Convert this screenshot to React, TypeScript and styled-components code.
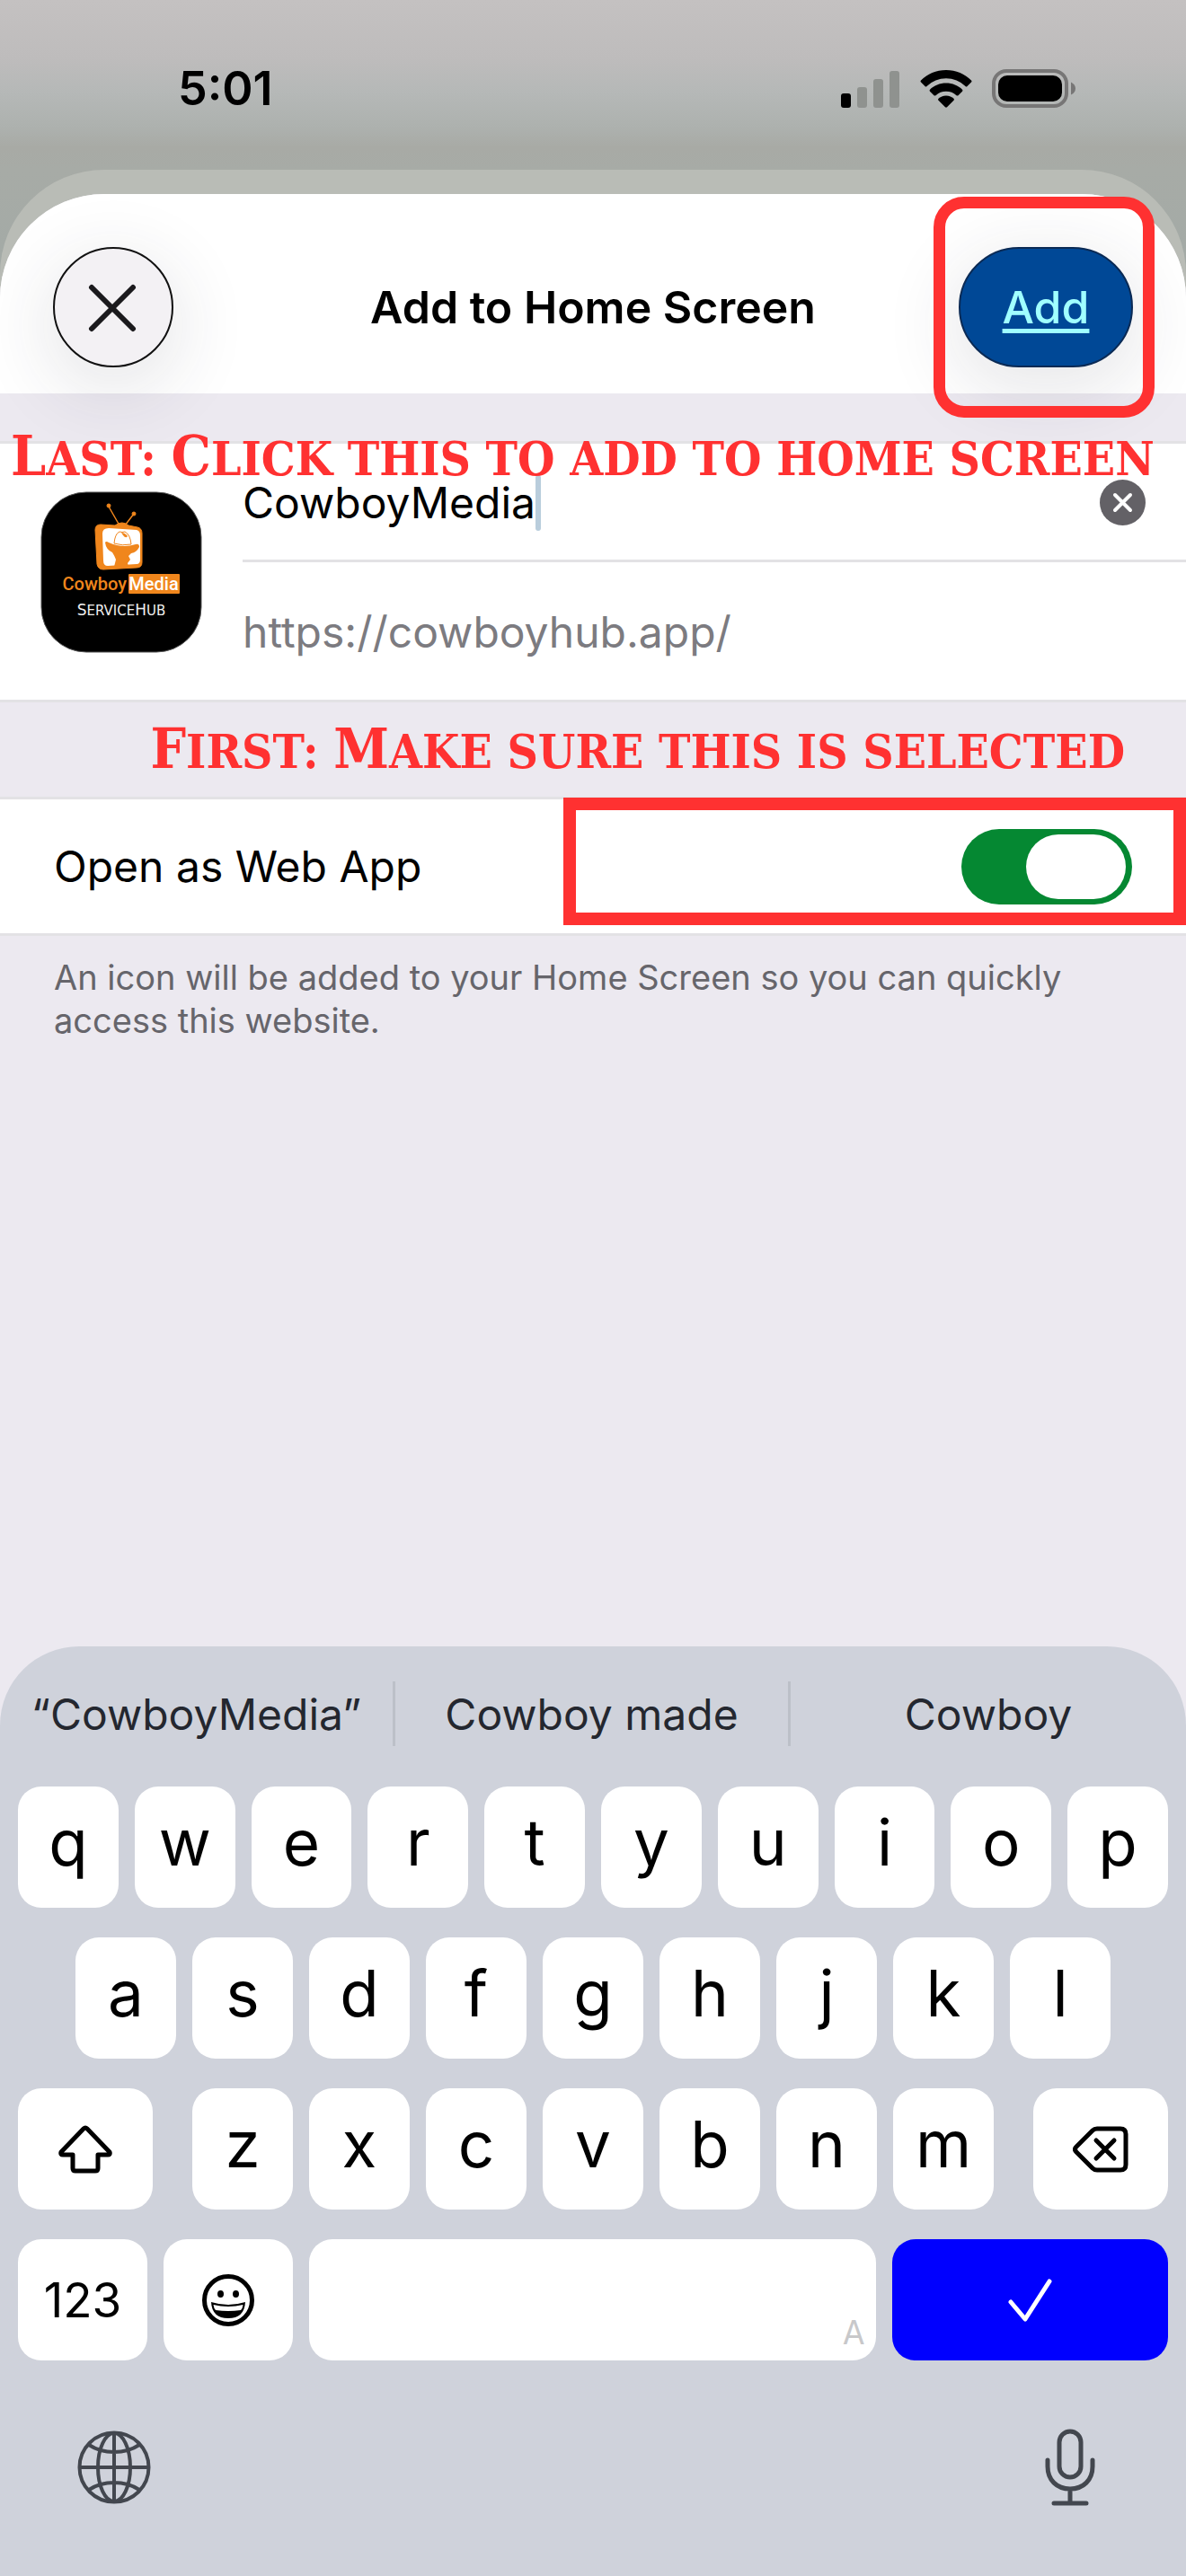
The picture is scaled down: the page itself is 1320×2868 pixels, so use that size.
import styled, { createGlobalStyle } from 'styled-components';
import { useState } from 'react';

/* —— tokens —— */
const sans    = `Inter, "Liberation Sans", sans-serif`;
const red     = '#ff3131';
const bgSheet = '#ece9f0';
const line    = '#e3e2e5';
const txtMain = '#000';
const txtSub  = '#7c7b80';
const bgKeys  = '#cfd2db';

const Global = createGlobalStyle`
  * { box-sizing: border-box; }
  body { margin: 0; font-family: ${sans}; background: ${bgKeys}; color: ${txtMain}; }
  button, input { font: inherit; color: inherit; margin: 0; padding: 0; border: 0; background: none; }
  button { cursor: pointer; }
  svg { display: block; }
`;

/* —— screen —— */
const Screen = styled.main`
  display: flex;
  flex-direction: column;
  min-height: 100vh;
  background: linear-gradient(#c4c1c1 0, #bebcbc 64px, #b5b8b7 104px, #adb1ae 142px, #a8aaa5 164px, #a7aba6 189px, #a3aaa6 300px);
`;

const StatusBar = styled.header`
  display: flex;
  align-items: center;
  justify-content: space-between;
  height: 189px;
  padding: 8px 122px 0 198px;
`;
const Clock = styled.time`
  font-size: 52px;
  font-weight: 600;
  line-height: 60px;
`;
const StatusIcons = styled.div`
  display: flex;
  align-items: center;
  gap: 22px;
`;

/* —— sheets —— */
const BackSheet = styled.div`
  display: flex;
  flex: 1;
  flex-direction: column;
  padding-top: 27px;
  background: #b9bcb6;
  border-radius: 116px 116px 0 0;
`;
const Sheet = styled.section`
  display: flex;
  flex: 1;
  flex-direction: column;
  background: ${bgSheet};
  border-radius: 116px 116px 0 0;
`;

const TitleBar = styled.div`
  display: grid;
  grid-template-columns: 1fr auto 1fr;
  align-items: center;
  height: 222px;
  padding: 30px 59px 0;
  background: #fff;
  border-radius: inherit;
`;
const Title = styled.h1`
  margin: 0;
  font-size: 50px;
  font-weight: 600;
  line-height: 60px;
`;
const RoundButton = styled.button`
  display: grid;
  place-items: center;
  width: 134px;
  height: 134px;
  border: 2px solid #111;
  border-radius: 67px;
  background: #f3f1f4;
  box-shadow: 0 20px 80px 10px rgba(50, 44, 60, .11);
`;
const AddSlot = styled.div`
  position: relative;
  justify-self: end;
`;
const AddButton = styled(RoundButton)`
  width: 194px;
  border-color: #0a2a55;
  background: #004896;
  color: #a0ffff;
  font-size: 50px;
  font-weight: 500;
  text-decoration: underline;
  text-decoration-thickness: 5px;
  text-underline-offset: 6px;
`;

/* —— hand-made marks over the sheet —— */
const AddMark = styled.div`
  position: absolute;
  inset: -56px -24px -56px -28px;
  border: 13px solid ${red};
  border-radius: 34px;
  pointer-events: none;
`;
const ToggleMark = styled.div`
  position: absolute;
  inset: -2px 0 9px 627px;
  border: 14px solid ${red};
  pointer-events: none;
`;
const Note = styled.p`
  margin: 0;
  color: ${red};
  font-family: "DejaVu Serif Condensed", "DejaVu Serif", serif;
  font-size: 53px;
  font-weight: 700;
  line-height: 60px;
  text-transform: uppercase;
  white-space: nowrap;
`;
const Cap = styled.span`
  font-size: 62px;
`;
const FloatingNote = styled(Note)`
  position: absolute;
  top: -16px;
  left: 12px;
`;
const NoteStrip = styled.div`
  display: flex;
  align-items: center;
  justify-content: flex-end;
  height: 105px;
  padding-right: 68px;
`;

/* —— form groups —— */
const Group = styled.div`
  position: relative;
  display: flex;
  border: solid ${line};
  border-width: 3px 0;
  background: #fff;
`;
const SiteGroup = styled(Group)`
  align-items: center;
  gap: 45px;
  margin-top: 53px;
  padding-left: 45px;
`;
const Fields = styled.div`
  flex: 1;
`;
const Field = styled.div<{ $height: number; $divided?: boolean }>`
  display: flex;
  align-items: center;
  height: ${p => p.$height}px;
  padding: 2px 45px 0 0;
  border-bottom: ${p => (p.$divided ? `3px solid ${line}` : '0')};
  font-size: 48px;
  line-height: 60px;
`;
const NameInput = styled.input`
  field-sizing: content;
  outline: none;
`;
const Caret = styled.span`
  width: 6px;
  height: 62px;
  border-radius: 3px;
  background: #b9cddc;
`;
const ClearButton = styled.button`
  margin-left: auto;
`;
const Url = styled.span`
  color: ${txtSub};
`;
const ToggleRow = styled(Group)`
  align-items: center;
  justify-content: space-between;
  height: 155px;
  padding: 0 60px;
  font-size: 48px;
`;
const Switch = styled.input`
  appearance: none;
  display: flex;
  align-items: center;
  width: 190px;
  height: 84px;
  padding: 0 7px;
  border-radius: 42px;
  background: #b5b5ba;

  &::before {
    content: '';
    width: 111px;
    height: 72px;
    border-radius: 36px;
    background: #fff;
  }
  &:checked { justify-content: flex-end; background: #058832; }
`;
const Hint = styled.p`
  margin: 0;
  padding: 22px 60px 0;
  color: #66656b;
  font-size: 38px;
  line-height: 48px;
`;

/* —— keyboard —— */
const Keyboard = styled.section`
  margin-top: auto;
  background: ${bgKeys};
  border-radius: 88px 88px 0 0;
`;
const Suggestions = styled.div`
  display: grid;
  grid-template-columns: repeat(3, 1fr);
  align-items: center;
  height: 156px;
  padding-bottom: 6px;
`;
const Suggestion = styled.button`
  height: 72px;
  color: #24272f;
  font-size: 48px;

  &:not(:last-child) { border-right: 3px solid #bcc0c8; }
`;
const Keys = styled.div`
  display: flex;
  flex-direction: column;
  gap: 33px;
  padding: 0 20px;
`;
const KeyRow = styled.div<{ $inset?: number }>`
  display: flex;
  gap: 18px;
  padding: 0 ${p => p.$inset ?? 0}px;
`;
const Letters = styled(KeyRow)`
  flex: 1;
`;
const Key = styled.button<{ $width?: number }>`
  display: flex;
  flex: ${p => (p.$width ? `0 0 ${p.$width}px` : '1 1 0')};
  align-items: center;
  justify-content: center;
  height: 135px;
  border-radius: 26px;
  background: #fff;
  font-size: 53px;
`;
const LetterKey = styled(Key)`
  padding-bottom: 12px;
  font-size: 71px;
`;
const SpaceKey = styled(Key)`
  align-items: flex-end;
  justify-content: flex-end;
  padding: 0 13px 9px;
  color: #c8c8ca;
  font-family: "DejaVu Sans Condensed", ${sans};
  font-size: 38px;
`;
const DoneKey = styled(Key)`
  background: #0000ff;
`;
const Dock = styled.div`
  display: flex;
  align-items: center;
  justify-content: space-between;
  height: 240px;
  padding: 0 100px 2px 86px;
  color: #43474f;
`;

/* —— drawings —— */
const Signal = () => (
  <svg width="66" height="42" viewBox="0 0 66 42">
    <rect x="0" y="26" width="11" height="16" rx="3" />
    <g fill="#8f928f">
      <rect x="18" y="19" width="11" height="23" rx="3" />
      <rect x="36" y="10" width="11" height="32" rx="3" />
      <rect x="54" y="1" width="11" height="41" rx="3" />
    </g>
  </svg>
);
const Wifi = () => (
  <svg width="58" height="42" viewBox="0 0 58 42">
    <path d="M29 0C40 0 50 4.300 57 11.500Q58 12.500 57 13.500L52.500 18Q51.500 19 50.500 18A31 31 0 0 0 7.500 18Q6.500 19 5.500 18L1 13.500Q0 12.500 1 11.500C8 4.300 18 0 29 0Z" />
    <path d="M29 14.500C36 14.500 42.500 17.200 47 21.700Q48 22.700 47 23.700L42.500 28.200Q41.500 29 40.500 28.200A17 17 0 0 0 17.500 28.200Q16.500 29 15.500 28.200L11 23.700Q10 22.700 11 21.700C15.500 17.200 22 14.500 29 14.500Z" />
    <path d="M29 28.500C32.500 28.500 35.500 29.800 37.500 31.800Q38.300 32.700 37.500 33.700L30 41.300Q29 42.200 28 41.300L20.500 33.700Q19.700 32.700 20.500 31.800C22.500 29.800 25.500 28.500 29 28.500Z" />
  </svg>
);
const Battery = () => (
  <svg width="94" height="43" viewBox="0 0 94 43">
    <rect x="2" y="2" width="81" height="39" rx="14" fill="none" stroke="#777676" strokeWidth="4" />
    <rect x="7" y="7" width="71" height="29" rx="10" />
    <path d="M88 14.500Q93 17 93 21.500T88 28.500Z" fill="#777676" />
  </svg>
);
const Cross = () => (
  <svg width="56" height="56" viewBox="0 0 56 56" fill="none" stroke="#1b1a1d" strokeWidth="6" strokeLinecap="round">
    <path d="M4 6L50 52M50 6L4 52" />
  </svg>
);
const Clear = () => (
  <svg width="51" height="51" viewBox="0 0 51 51">
    <circle cx="25.500" cy="25.500" r="25.500" fill="#636166" />
    <path d="M17 17L34 34M34 17L17 34" stroke="#fff" strokeWidth="4" strokeLinecap="round" />
  </svg>
);
const AppIcon = () => (
  <svg width="180" height="180" viewBox="0 0 180 180" role="img" aria-label="CowboyMedia ServiceHub">
    <rect x="1" y="1" width="178" height="178" rx="50" stroke="#555" strokeWidth="1" />
    <g fill="#f0861c" stroke="#f0861c">
      <path d="M88 38L76 17M94 38L104 25" strokeWidth="1.500" />
      <circle cx="76" cy="16" r="2" />
      <circle cx="104" cy="25" r="2" />
      <path d="M83 38Q91 32 98 38L108 40Q113 41 113 47V79Q113 85 107 85L70 87Q64 87 63 81L61 43Q61 37 67 37Z" />
    </g>
    <path d="M76 41L107 43Q111 44 111 49V76Q111 81 107 81L75 83Q70 83 70 77L69 47Q69 41 76 41Z" fill="#fff" />
    <path d="M72 57Q73 55 76 57Q91 64 106 59Q110 58 110 62Q107 68 101 69L98 72L100 76L97 80L98 84H82L84 76Q82 71 80 68Q73 65 72 57Z" fill="#f0861c" />
    <path d="M82 58Q83 47 88 45Q91 46 94 45Q100 48 101 59Q91 61 82 58Z" fill="#fff" stroke="#f0861c" strokeWidth="1" />
    <path d="M90 46Q94 46 97 50Q95 53 92 49Z" fill="#f0861c" />
    <rect x="98" y="92" width="57" height="22" rx="1" fill="#f0861c" />
    <g fontFamily="Roboto, sans-serif" fontSize="20" fontWeight="500">
      <text x="96" y="110" fill="#f0861c" textAnchor="end">Cowboy</text>
      <text x="126" y="110" fill="#fff" textAnchor="middle">Media</text>
    </g>
    <text x="90" y="138" fill="#eee" fontSize="17" fontFamily='"DejaVu Sans", sans-serif' textAnchor="middle">
      S<tspan fontSize="15">ERVICE</tspan>H<tspan fontSize="15">UB</tspan>
    </text>
  </svg>
);
const Shift = () => (
  <svg width="60" height="54" viewBox="0 0 60 54" fill="none" stroke="#000" strokeWidth="5" strokeLinejoin="round">
    <path d="M28 4Q30 2 32 4L57 30Q58 33 55 33H44V48Q44 51 41 51H19Q16 51 16 48V33H5Q2 33 3 30Z" />
  </svg>
);
const Backspace = () => (
  <svg width="62" height="52" viewBox="0 0 62 52" fill="none" stroke="#000" strokeWidth="5" strokeLinecap="round" strokeLinejoin="round">
    <path d="M27 3H53Q59 3 59 9V43Q59 49 53 49H27Q24 49 22 47L4 29Q1 26 4 23L22 5Q24 3 27 3Z" />
    <path d="M26 16L46 36M46 16L26 36" />
  </svg>
);
const Smile = () => (
  <svg width="58" height="58" viewBox="0 0 58 58">
    <circle cx="29" cy="29" r="26.500" fill="none" stroke="#000" strokeWidth="5" />
    <ellipse cx="20.500" cy="22" rx="3.500" ry="4" />
    <ellipse cx="37.500" cy="22" rx="3.500" ry="4" />
    <path d="M10 31Q29 37 48 31Q47 49 29 49T10 31Z" />
    <path d="M12.500 34Q29 38 45.500 34Q45 38 43 40Q29 42 15 40Q13 38 12.500 34Z" fill="#fff" />
  </svg>
);
const Check = () => (
  <svg width="50" height="50" viewBox="0 0 50 50" fill="none" stroke="#fff" strokeWidth="5" strokeLinecap="round" strokeLinejoin="round">
    <path d="M3 27L19 46L46 4" />
  </svg>
);
const Globe = () => (
  <svg width="82" height="82" viewBox="0 0 82 82" fill="none" stroke="currentColor" strokeWidth="4">
    <circle cx="41" cy="41" r="38.500" />
    <ellipse cx="41" cy="41" rx="18" ry="38" />
    <path d="M41 3V79M3 41H79M13 16Q25 24 41 24T69 16M13 66Q25 58 41 58T69 66" />
  </svg>
);
const Mic = () => (
  <svg width="58" height="86" viewBox="0 0 58 86" fill="none" stroke="currentColor" strokeWidth="5" strokeLinecap="round">
    <rect x="17" y="3" width="24" height="51" rx="12" />
    <path d="M4 35V42C4 57 14 67 29 67S54 57 54 42V35M29 67V82M11 83H47" />
  </svg>
);

/* ========================================================= */
export default function App() {
  const [name, setName] = useState('CowboyMedia');
  const [webApp, setWebApp] = useState(true);

  return (
    <Screen>
      <Global />
      <StatusBar>
        <Clock>5:01</Clock>
        <StatusIcons>
          <Signal />
          <Wifi />
          <Battery />
        </StatusIcons>
      </StatusBar>

      <BackSheet>
        <Sheet>
          <TitleBar>
            <RoundButton aria-label="Close"><Cross /></RoundButton>
            <Title>Add to Home Screen</Title>
            <AddSlot>
              <AddButton>Add</AddButton>
              <AddMark />
            </AddSlot>
          </TitleBar>

          <SiteGroup>
            <AppIcon />
            <Fields>
              <Field $height={132} $divided>
                <NameInput aria-label="Name" value={name} onChange={e => setName(e.target.value)} />
                <Caret />
                <ClearButton aria-label="Clear name" onClick={() => setName('')}><Clear /></ClearButton>
              </Field>
              <Field $height={153}>
                <Url>https://cowboyhub.app/</Url>
              </Field>
            </Fields>
            <FloatingNote>
              <Cap>L</Cap>ast: <Cap>C</Cap>lick this to add to home screen
            </FloatingNote>
          </SiteGroup>

          <NoteStrip>
            <Note><Cap>F</Cap>irst: <Cap>M</Cap>ake sure this is selected</Note>
          </NoteStrip>

          <ToggleRow>
            <label htmlFor="web-app">Open as Web App</label>
            <Switch id="web-app" type="checkbox" role="switch" checked={webApp} onChange={e => setWebApp(e.target.checked)} />
            <ToggleMark />
          </ToggleRow>
          <Hint>An icon will be added to your Home Screen so you can quickly access this website.</Hint>

          <Keyboard>
            <Suggestions>
              <Suggestion>“CowboyMedia”</Suggestion>
              <Suggestion>Cowboy made</Suggestion>
              <Suggestion>Cowboy</Suggestion>
            </Suggestions>
            <Keys>
              <KeyRow>
                {[...'qwertyuiop'].map(c => <LetterKey key={c}>{c}</LetterKey>)}
              </KeyRow>
              <KeyRow $inset={64}>
                {[...'asdfghjkl'].map(c => <LetterKey key={c}>{c}</LetterKey>)}
              </KeyRow>
              <KeyRow>
                <Key $width={150} aria-label="Shift"><Shift /></Key>
                <Letters $inset={26}>
                  {[...'zxcvbnm'].map(c => <LetterKey key={c}>{c}</LetterKey>)}
                </Letters>
                <Key $width={150} aria-label="Delete"><Backspace /></Key>
              </KeyRow>
              <KeyRow>
                <Key $width={144}>123</Key>
                <Key $width={144} aria-label="Emoji"><Smile /></Key>
                <SpaceKey aria-label="Space">A</SpaceKey>
                <DoneKey $width={307} aria-label="Done"><Check /></DoneKey>
              </KeyRow>
            </Keys>
            <Dock>
              <button aria-label="Next keyboard"><Globe /></button>
              <button aria-label="Dictate"><Mic /></button>
            </Dock>
          </Keyboard>
        </Sheet>
      </BackSheet>
    </Screen>
  );
}
